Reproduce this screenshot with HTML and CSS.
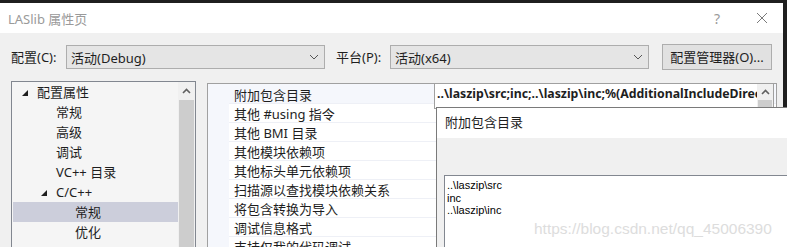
FILE: index.html
```html
<!DOCTYPE html>
<html>
    <head>
        <meta charset="utf-8">
        <title>LASlib 属性页</title>
        <link rel="stylesheet" href="styles.css">
    </head>
    <body>
        <div class="window">
            <div class="titlebar">
                <span class="title">LASlib 属性页</span>
                <span class="help">?</span>
                <svg class="close" width="12" height="12" viewBox="0 0 12 12">
                    <path d="M1 1 L11 11 M11 1 L1 11" stroke="#7a7a7a" stroke-width="1" fill="none"/>
                </svg>
            </div>

            <div class="toolbar">
                <span class="lbl">配置(C):</span>
                <div class="select">
                    <span>活动(Debug)</span>
                    <svg class="chev" width="10" height="6" viewBox="0 0 10 6">
                        <polyline points="1,1 5,5 9,1" stroke="#555" fill="none"/>
                    </svg>
                </div>
                <span class="lbl lbl-platform">平台(P):</span>
                <div class="select">
                    <span>活动(x64)</span>
                    <svg class="chev" width="10" height="6" viewBox="0 0 10 6">
                        <polyline points="1,1 5,5 9,1" stroke="#555" fill="none"/>
                    </svg>
                </div>
                <div class="btn">配置管理器(O)...</div>
            </div>

            <div class="main">
                <div class="tree">
                    <ul class="tree-items">
                        <li class="l0"><i class="twisty"></i>配置属性</li>
                        <li class="l1">常规</li>
                        <li class="l1">高级</li>
                        <li class="l1">调试</li>
                        <li class="l1">VC++ 目录</li>
                        <li class="l1"><i class="twisty"></i>C/C++</li>
                        <li class="l2 selected">常规</li>
                        <li class="l2">优化</li>
                    </ul>
                    <div class="vscroll">
                        <div class="vscroll-btn">
                            <svg width="9" height="6" viewBox="0 0 9 6">
                                <polyline points="1,5 4.5,1.5 8,5" stroke="#606060" stroke-width="1.6" fill="none"/>
                            </svg>
                        </div>
                        <div class="vscroll-thumb"></div>
                    </div>
                </div>

                <div class="grid">
                    <div class="prop current">附加包含目录</div>
                    <div class="prop">其他 #using 指令</div>
                    <div class="prop">其他 BMI 目录</div>
                    <div class="prop">其他模块依赖项</div>
                    <div class="prop">其他标头单元依赖项</div>
                    <div class="prop">扫描源以查找模块依赖关系</div>
                    <div class="prop">将包含转换为导入</div>
                    <div class="prop">调试信息格式</div>
                    <div class="prop">支持仅我的代码调试</div>

                    <div class="value-editor">
                        <span class="value-text">..\laszip\src;inc;..\laszip\inc;%(AdditionalIncludeDirectories)</span>
                        <div class="value-scroll">
                            <div class="value-scroll-btn">
                                <svg width="9" height="6" viewBox="0 0 9 6">
                                    <polyline points="1,5 4.5,1.5 8,5" stroke="#606060" stroke-width="1.6" fill="none"/>
                                </svg>
                            </div>
                            <div class="value-scroll-thumb"></div>
                        </div>
                    </div>
                </div>
            </div>
        </div>

        <div class="popup">
            <div class="popup-head">附加包含目录</div>
            <div class="popup-body">
                <div class="textbox">..\laszip\src<br>inc<br>..\laszip\inc</div>
            </div>
        </div>
        <div class="watermark">https://blog.csdn.net/qq_45006390</div>
    </body>
</html>
```

FILE: styles.css
```css
* {
    box-sizing: border-box;
}

html {
    overflow: hidden;
}

body {
    position: relative;
    width: 787px;
    height: 247px;
    margin: 0;
    overflow: hidden;
    background-color: #1f1f1f;
    font-family: "Noto Sans", "Noto Sans CJK SC", sans-serif;
    font-size: 13px;
    color: #1e1e1e;
}

.window {
    width: 783px;
    height: 247px;
    overflow: hidden;
    background-color: #f0f0f0;
    border-top: 3px solid #1f1f1f;
}

.titlebar {
    display: flex;
    align-items: center;
    height: 30px;
    padding-left: 8px;
    background-color: #fff;
}

.title {
    flex: 1;
    color: #9a9a9a;
    font-size: 13px;
}

.help {
    color: #9a9a9a;
    font-size: 14px;
    margin-right: 36px;
}

.close {
    margin-right: 15px;
}

.toolbar {
    display: flex;
    align-items: center;
    height: 48px;
    padding-left: 11px;
}

.lbl {
    width: 55px;
    line-height: 18px;
}

.lbl-platform {
    width: 54px;
    margin-left: 11px;
}

.select {
    display: flex;
    align-items: center;
    justify-content: space-between;
    width: 259px;
    height: 24px;
    padding: 0 5px 0 4px;
    background-color: #e5e5e5;
    border: 1px solid #adadad;
}

.btn {
    width: 110px;
    height: 26px;
    margin-left: 13px;
    line-height: 24px;
    text-align: center;
    background-color: #e1e1e1;
    border: 1px solid #adadad;
}

.main {
    display: flex;
    align-items: flex-start;
    height: 166px;
    padding-left: 11px;
}

/* tree on the left */
.tree {
    display: flex;
    width: 185px;
    height: 166px;
    background-color: #f5f5f5;
    border: 1px solid #828790;
    border-bottom: none;
}

.tree-items {
    flex: 1;
    margin: 0;
    padding: 0;
    list-style: none;
}

.tree-items li {
    position: relative;
    height: 20px;
    line-height: 20px;
    margin-left: 1px;
    white-space: nowrap;
}

.tree-items .l0 {
    padding-left: 24px;
}

.tree-items .l1 {
    padding-left: 43px;
}

.tree-items .l2 {
    padding-left: 62px;
}

.tree-items .selected {
    background-color: #cccedb;
}

.twisty {
    position: absolute;
    top: 8px;
    width: 0;
    height: 0;
    margin-left: -15px;
    border-left: 6px solid transparent;
    border-bottom: 6px solid #1e1e1e;
}

.vscroll {
    display: flex;
    flex-direction: column;
    width: 17px;
    background-color: #f0f0f0;
}

.vscroll-btn {
    display: flex;
    align-items: center;
    justify-content: center;
    height: 18px;
}

.vscroll-thumb {
    flex: 1;
    margin: 0 1px;
    background-color: #cdcdcd;
}

/* property grid */
.grid {
    position: relative;
    width: 570px;
    height: 164px;
    margin-top: 2px;
    margin-left: 11px;
    padding-top: 1px;
    overflow: hidden;
    background-color: #f5f7fc;
    border: 1px solid #a0a0a0;
    border-bottom: none;
}

.prop {
    height: 19px;
    margin-left: 21px;
    padding-top: 2px;
    padding-left: 5px;
    line-height: 16px;
    background-color: #fff;
    border-bottom: 1px solid #eef0f6;
    white-space: nowrap;
}

.prop.current {
    background-color: #f5f7fc;
}

.value-editor {
    position: absolute;
    top: -1px;
    left: 226px;
    width: 340px;
    height: 26px;
    display: flex;
    background-color: #fff;
    border: 1px solid #a0a0a0;
}

.value-text {
    flex: 1;
    overflow: hidden;
    padding-left: 2px;
    line-height: 19px;
    font-size: 12.3px;
    font-weight: bold;
    white-space: nowrap;
}

.value-scroll {
    width: 16px;
    background-color: #f0f0f0;
}

.value-scroll-btn {
    display: flex;
    align-items: center;
    justify-content: center;
    height: 16px;
}

.value-scroll-thumb {
    height: 8px;
    margin: 0 1px;
    background-color: #cdcdcd;
}

/* popup editor dialog, runs past the right and bottom edge */
.popup {
    position: absolute;
    top: 107px;
    left: 436px;
    width: 351px;
    height: 140px;
    background-color: #f0f0f0;
    border: 1px solid #7a7a7a;
    border-right: none;
    border-bottom: none;
}

.popup-head {
    height: 30px;
    padding-left: 8px;
    line-height: 29px;
    background-color: #fff;
}

.popup-body {
    padding: 37px 0 0 7px;
}

.textbox {
    height: 72px;
    padding: 3px 2px;
    font-family: "Liberation Sans", Arial, sans-serif;
    font-size: 11px;
    line-height: 12.5px;
    color: #000;
    background-color: #fff;
    border: 1px solid #828790;
    border-right: none;
    border-bottom: none;
}

.watermark {
    position: absolute;
    top: 219px;
    left: 534px;
    font-family: "Liberation Sans", Arial, sans-serif;
    font-size: 15.5px;
    line-height: 20px;
    color: #dddddd;
}
```
